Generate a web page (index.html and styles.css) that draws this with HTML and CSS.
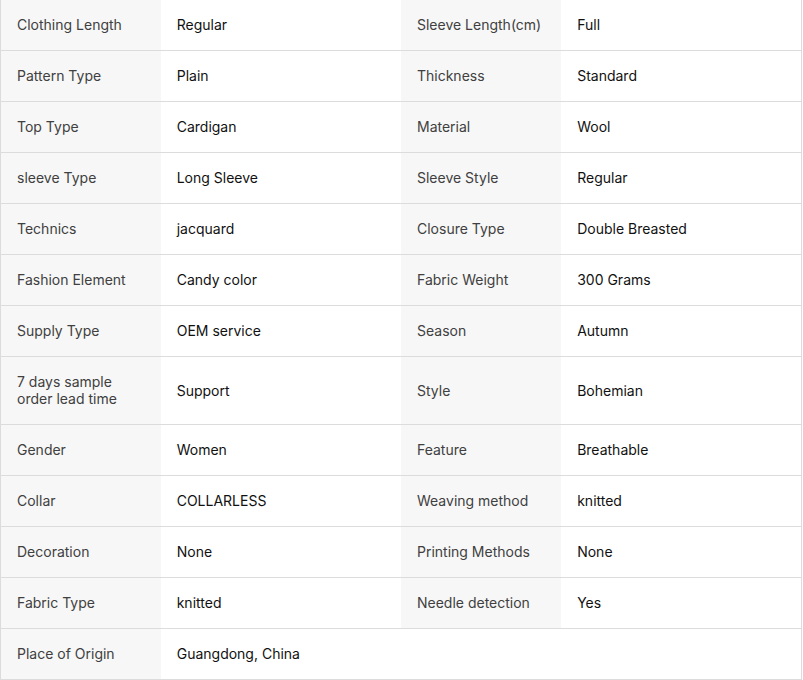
FILE: index.html
```html
<!DOCTYPE html>
<html>
<head>
<meta charset="utf-8">
<link rel="stylesheet" href="styles.css">
</head>
<body>
<table class="attrs">
  <colgroup>
    <col class="c-label"><col class="c-value"><col class="c-label"><col class="c-value">
  </colgroup>
  <tbody>
    <tr><td class="k">Clothing Length</td><td class="v">Regular</td><td class="k">Sleeve Length(cm)</td><td class="v">Full</td></tr>
    <tr><td class="k">Pattern Type</td><td class="v">Plain</td><td class="k">Thickness</td><td class="v">Standard</td></tr>
    <tr><td class="k">Top Type</td><td class="v">Cardigan</td><td class="k">Material</td><td class="v">Wool</td></tr>
    <tr><td class="k">sleeve Type</td><td class="v">Long Sleeve</td><td class="k">Sleeve Style</td><td class="v">Regular</td></tr>
    <tr><td class="k">Technics</td><td class="v">jacquard</td><td class="k">Closure Type</td><td class="v">Double Breasted</td></tr>
    <tr><td class="k">Fashion Element</td><td class="v">Candy color</td><td class="k">Fabric Weight</td><td class="v">300 Grams</td></tr>
    <tr><td class="k">Supply Type</td><td class="v">OEM service</td><td class="k">Season</td><td class="v">Autumn</td></tr>
    <tr><td class="k">7 days sample order lead time</td><td class="v">Support</td><td class="k">Style</td><td class="v">Bohemian</td></tr>
    <tr><td class="k">Gender</td><td class="v">Women</td><td class="k">Feature</td><td class="v">Breathable</td></tr>
    <tr><td class="k">Collar</td><td class="v">COLLARLESS</td><td class="k">Weaving method</td><td class="v">knitted</td></tr>
    <tr><td class="k">Decoration</td><td class="v">None</td><td class="k">Printing Methods</td><td class="v">None</td></tr>
    <tr><td class="k">Fabric Type</td><td class="v">knitted</td><td class="k">Needle detection</td><td class="v">Yes</td></tr>
    <tr><td class="k">Place of Origin</td><td class="v">Guangdong, China</td><td class="empty"></td><td class="empty"></td></tr>
  </tbody>
</table>
</body>
</html>
```
FILE: styles.css
```css
html, body {
  margin: 0;
  padding: 0;
  background: #fff;
}
body {
  font-family: Inter, "Noto Sans", sans-serif;
  font-size: 14px;
  line-height: 17px;
}
.attrs {
  width: 802px;
  border-collapse: collapse;
  table-layout: fixed;
  border-left: 1px solid #dcdcdc;
  border-right: 1px solid #dcdcdc;
}
.c-label { width: 160px; }
.c-value { width: 240px; }
.attrs td {
  padding: 16px 16px 17px;
  border-bottom: 1px solid #dcdcdc;
  vertical-align: middle;
  height: 17px;
}
.attrs td.k {
  background: #f7f7f7;
  color: #404040;
}
.attrs td.v {
  background: #fff;
  color: #111;
  font-weight: 400;
}
.attrs td.empty {
  background: #fff;
}
```
